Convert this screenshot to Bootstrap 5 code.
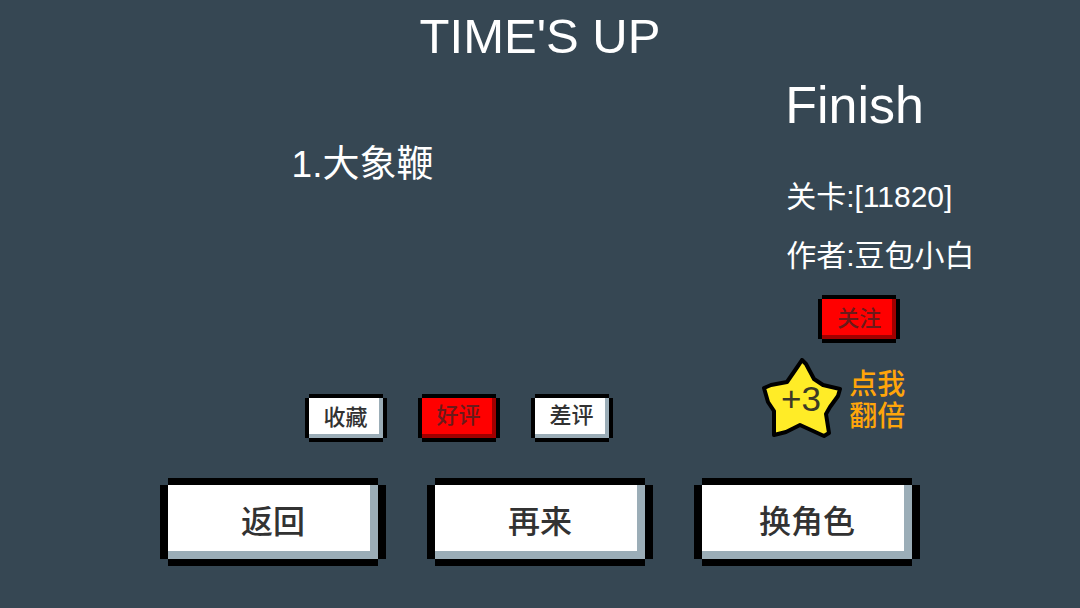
<!DOCTYPE html>
<html lang="zh-CN">
<head>
<meta charset="utf-8">
<meta name="viewport" content="width=device-width, initial-scale=1">
<title>TIME'S UP</title>
<link href="https://cdn.jsdelivr.net/npm/bootstrap@5.3.0/dist/css/bootstrap.min.css" rel="stylesheet">
<style>
body{background:#364753;color:#fff;font-family:"Liberation Sans","Noto Sans CJK SC",sans-serif}
.headline{font-size:49px;line-height:72px}
.board{display:grid;grid-template-columns:27% 1fr 27.3%}
.winners{font-size:37px;line-height:48px;padding-top:69px}
.finish{font-size:52px;line-height:66px}
.info{font-size:30px;line-height:40px}
.facts{gap:19px;padding:39px 0 0 1px}
/* pixel-style key: black edges outside, shade along the right and bottom inside */
.key{border:0;background:#fff;color:#323232;font-family:"Liberation Sans","Noto Sans CJK TC",sans-serif;
 box-shadow:inset -8px -8px #9badb7,0 -7px #000,0 7px #000,-8px 0 #000,8px 0 #000;
 width:210px;height:74px;padding:0;font-size:32px;font-weight:500;line-height:40px}
.key-sm{width:74px;height:40px;font-size:22px;line-height:32px;font-family:"Liberation Sans","Noto Sans CJK SC",sans-serif;
 box-shadow:inset -4px -4px #9badb7,0 -4px #000,0 4px #000,-4px 0 #000,4px 0 #000}
.key-red{background:#f00;color:#6b1a1a;box-shadow:inset -4px -4px #a00000,0 -4px #000,0 4px #000,-4px 0 #000,4px 0 #000}
.votes{gap:39px;padding-left:17px}
.choices{gap:57px;padding:47px 0 48px}
.follow{margin:23px 0 0 37px}
.bonus{color:#ffa50a;font-size:28px;font-weight:500;line-height:32px;margin:19px 0 0 -23px;gap:7px}
.bonus-label{padding-top:5px}
</style>
</head>
<body>
<main>
<h1 class="headline text-center fw-normal m-0">TIME'S UP</h1>
<section class="board">
 <div></div>
 <div class="d-flex flex-column justify-content-between">
  <div class="winners">1.大象鞭</div>
  <div class="votes d-flex">
   <button type="button" class="key key-sm">收藏</button>
   <button type="button" class="key key-sm key-red pb-1">好评</button>
   <button type="button" class="key key-sm pb-1">差评</button>
  </div>
 </div>
 <aside>
  <h2 class="finish fw-normal m-0">Finish</h2>
  <div class="facts d-flex flex-column">
   <div class="info">关卡:[11820]</div>
   <div class="info">作者:豆包小白</div>
  </div>
  <button type="button" class="key key-sm key-red follow d-block">关注</button>
  <a href="#" class="bonus d-flex align-items-center text-decoration-none">
   <svg width="80" height="80" viewBox="0 0 80 80" aria-hidden="true"><path d="M40 2L44 6L52 21L61 27L78 31L76 38L68 49L64 56L67 75L62 78L38 67L24 74L12 77V53L6 44L2 30L9 27L25 24L36 8Z" fill="#ffec27" stroke="#000" stroke-width="4" stroke-linejoin="round"/><text x="39" y="53" text-anchor="middle" font-size="35" font-weight="400" fill="#3c3a26">+3</text></svg>
   <span class="bonus-label">点我<br>翻倍</span>
  </a>
 </aside>
</section>
<nav class="choices d-flex justify-content-center">
 <button type="button" class="key">返回</button>
 <button type="button" class="key">再来</button>
 <button type="button" class="key">换角色</button>
</nav>
</main>
<script src="https://cdn.jsdelivr.net/npm/bootstrap@5.3.0/dist/js/bootstrap.bundle.min.js"></script>
</body>
</html>
